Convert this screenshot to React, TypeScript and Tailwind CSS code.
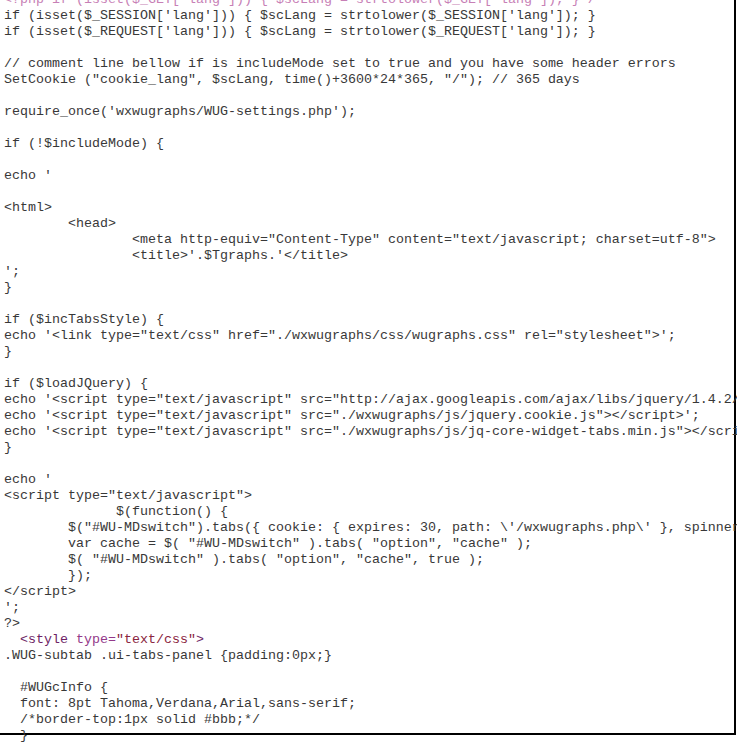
import React from "react";

type Seg = { t: string; c?: string };
type Line = string | Seg[];

const lines: Line[] = [
  [{ t: "<?php if (isset($_GET['lang'])) { $scLang = strtolower($_GET['lang']); } /", c: "#c77fb6" }],
  "if (isset($_SESSION['lang'])) { $scLang = strtolower($_SESSION['lang']); }",
  "if (isset($_REQUEST['lang'])) { $scLang = strtolower($_REQUEST['lang']); }",
  "",
  "// comment line bellow if is includeMode set to true and you have some header errors",
  'SetCookie ("cookie_lang", $scLang, time()+3600*24*365, "/"); // 365 days',
  "",
  "require_once('wxwugraphs/WUG-settings.php');",
  "",
  "if (!$includeMode) {",
  "",
  "echo '",
  "",
  "<html>",
  "        <head>",
  '                <meta http-equiv="Content-Type" content="text/javascript; charset=utf-8">',
  "                <title>'.$Tgraphs.'</title>",
  "';",
  "}",
  "",
  "if ($incTabsStyle) {",
  "echo '<link type=\"text/css\" href=\"./wxwugraphs/css/wugraphs.css\" rel=\"stylesheet\">';",
  "}",
  "",
  "if ($loadJQuery) {",
  "echo '<script type=\"text/javascript\" src=\"http://ajax.googleapis.com/ajax/libs/jquery/1.4.2/jquery.min.js\"></script>';",
  "echo '<script type=\"text/javascript\" src=\"./wxwugraphs/js/jquery.cookie.js\"></script>';",
  "echo '<script type=\"text/javascript\" src=\"./wxwugraphs/js/jq-core-widget-tabs.min.js\"></script>';",
  "}",
  "",
  "echo '",
  '<script type="text/javascript">',
  "              $(function() {",
  "        $(\"#WU-MDswitch\").tabs({ cookie: { expires: 30, path: \\'/wxwugraphs.php\\' }, spinner: \\'\\' });",
  '        var cache = $( "#WU-MDswitch" ).tabs( "option", "cache" );',
  '        $( "#WU-MDswitch" ).tabs( "option", "cache", true );',
  "        });",
  "</script>",
  "';",
  "?>",
  [
    { t: "  " },
    { t: "<style", c: "#6e1f66" },
    { t: " " },
    { t: "type=", c: "#93398a" },
    { t: '"text/css"', c: "#8a2440" },
    { t: ">", c: "#6e1f66" },
  ],
  ".WUG-subtab .ui-tabs-panel {padding:0px;}",
  "",
  "  #WUGcInfo {",
  "  font: 8pt Tahoma,Verdana,Arial,sans-serif;",
  "  /*border-top:1px solid #bbb;*/",
  "  }",
  "",
];

export default function App() {
  return (
    <div className="w-[737px] h-[744px] bg-white overflow-hidden">
      <div className="relative w-[736px] h-[743px] border-r-2 border-b-2 border-black">
        <div
          className="-mt-[8px] pl-[4px] text-[13.333px] leading-[16px] text-[#383838] whitespace-pre"
          style={{ fontFamily: '"Liberation Mono", "Courier New", monospace' }}
        >
          {lines.map((ln, i) => (
            <div key={i} className="h-[16px]">
              {typeof ln === "string"
                ? ln || "\u00a0"
                : ln.map((s, j) => (
                    <span key={j} style={s.c ? { color: s.c } : undefined}>
                      {s.t}
                    </span>
                  ))}
            </div>
          ))}
        </div>
      </div>
    </div>
  );
}
